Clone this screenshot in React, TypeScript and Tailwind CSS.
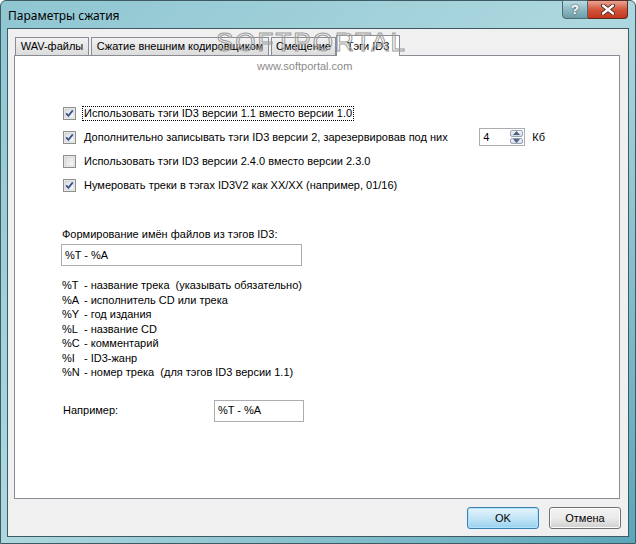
import React from "react";

const font = { fontFamily: '"Liberation Sans", Arial, sans-serif' };

function Check({ checked }: { checked: boolean }) {
  return (
    <svg width="13" height="13" viewBox="0 0 13 13" className="shrink-0">
      <defs>
        <linearGradient id="cbg" x1="0" y1="0" x2="1" y2="1">
          <stop offset="0" stopColor="#dcdcdc" />
          <stop offset="1" stopColor="#fbfbfb" />
        </linearGradient>
      </defs>
      <rect x="0.5" y="0.5" width="12" height="12" fill="#f4f4f4" stroke="#8e8f8f" />
      <rect x="2" y="2" width="9" height="9" fill="url(#cbg)" stroke="#c3c3c3" strokeWidth="0.6" />
      {checked && (
        <path d="M3.2 6.3 L5.4 8.8 L9.8 3.4" fill="none" stroke="#3a5591" strokeWidth="1.8" />
      )}
    </svg>
  );
}

function Row({ checked, focus, children }: { checked: boolean; focus?: boolean; children: React.ReactNode }) {
  return (
    <div className="flex h-6 items-center">
      <Check checked={checked} />
      <span className={"ml-[7px] text-[11px] leading-[13px] px-[1px] " + (focus ? "outline outline-1 outline-dotted outline-black" : "")}>
        {children}
      </span>
    </div>
  );
}

function Tab({ label, w, active }: { label: string; w: string; active?: boolean }) {
  return active ? (
    <div className={"relative z-10 -mb-px -ml-[2px] flex h-[21px] items-center justify-center border border-b-0 border-[#898c95] bg-white text-[11px] " + w}>
      {label}
    </div>
  ) : (
    <div className={"mt-[2px] flex h-[18px] items-center justify-center border border-b-0 border-[#898c95] bg-gradient-to-b from-[#f2f2f2] to-[#dcdcdc] text-[11px] " + w}>
      {label}
    </div>
  );
}

function Btn({ label, def }: { label: string; def?: boolean }) {
  return (
    <div
      className={
        "flex h-[22px] w-[72px] items-center justify-center rounded-[3px] border text-[11px] " +
        (def
          ? "border-[#3c7fb1] bg-gradient-to-b from-[#e5f4fc] via-[#c4e5f6] to-[#98d1ef] shadow-[inset_0_0_0_1px_#aee3fb]"
          : "border-[#707070] bg-gradient-to-b from-[#f2f2f2] via-[#ebebeb] to-[#cfcfcf] shadow-[inset_0_0_0_1px_#fcfcfc]")
      }
    >
      {label}
    </div>
  );
}

export default function App() {
  const legend = [
    ["%T", "- название трека  (указывать обязательно)"],
    ["%A", "- исполнитель CD или трека"],
    ["%Y", "- год издания"],
    ["%L", "- название CD"],
    ["%C", "- комментарий"],
    ["%I", "- ID3-жанр"],
    ["%N", "- номер трека  (для тэгов ID3 версии 1.1)"],
  ];
  return (
    <div style={font} className="h-[544px] w-[636px] overflow-hidden text-black">
      <div className="relative flex h-full flex-col rounded-t-[6px] border border-[#3e5b63] bg-gradient-to-br from-[#8ec6d2] via-[#aed8df] to-[#5aa6ba] px-[6px] pb-[6px]">
        {/* title bar */}
        <div className="flex h-[27px] shrink-0 items-start">
          <div className="pl-[1px] pt-[6px] text-[12px]" style={{ fontFamily: '"Noto Sans", "Liberation Sans", sans-serif' }}>
            Параметры сжатия
          </div>
          <div className="ml-auto mr-[1px] flex h-[19px] -mt-px">
            <div className="flex w-[26px] items-center justify-center rounded-bl-[4px] border border-[#4d6a72] bg-gradient-to-b from-[#b9dbe2] via-[#8fb9c3] to-[#6b9ca8] text-[13px] font-bold text-white [text-shadow:0_0_2px_#333]">
              ?
            </div>
            <div className="flex w-[40px] items-center justify-center rounded-br-[4px] border border-l-0 border-[#5a2a22] bg-gradient-to-b from-[#e8a493] via-[#d2553c] to-[#c3371d]">
              <svg width="14" height="11" viewBox="0 0 14 11">
                <path d="M2 1.5 L12 9.5 M12 1.5 L2 9.5" stroke="#3a1a14" strokeWidth="4" strokeLinecap="round" />
                <path d="M2 1.5 L12 9.5 M12 1.5 L2 9.5" stroke="#fff" strokeWidth="2.4" strokeLinecap="round" />
              </svg>
            </div>
          </div>
        </div>

        {/* client area */}
        <div className="flex flex-1 flex-col border border-[#3e5b63] bg-[#f0f0f0] px-[6px] pt-[6px]">
          {/* tabs */}
          <div className="flex items-end gap-[2px] pl-[1px]">
            <Tab label="WAV-файлы" w="w-[74px]" />
            <Tab label="Сжатие внешним кодировщиком" w="w-[178px]" />
            <Tab label="Смещение" w="w-[65px]" />
            <Tab label="Тэги ID3" w="w-[64px]" active />
          </div>
          <div className="relative mr-[2px] h-[444px] border border-[#898c95] bg-white pl-[48px] pt-[45px]">
            {/* watermark */}
            <div className="pointer-events-none absolute left-[201px] top-[-27px] z-20 text-[26px] leading-none tracking-[2px] text-transparent [-webkit-text-stroke:1px_#9c9c9c]">
              SOFTPORTAL
            </div>
            <div className="pointer-events-none absolute left-[242px] top-[2px] text-[11px] text-[#8a8a8a]">
              www.softportal.com
            </div>

            <Row checked focus>Использовать тэги ID3 версии 1.1 вместо версии 1.0</Row>
            <div className="flex h-6 items-center">
              <Check checked />
              <span className="ml-[7px] px-[1px] text-[11px]">
                Дополнительно записывать тэги ID3 версии 2, зарезервировав под них
              </span>
              <div className="ml-auto flex h-[18px] w-[46px] border border-[#abadb3] bg-white">
                <div className="flex flex-1 items-center pl-[3px] text-[11px]">4</div>
                <div className="flex w-[15px] flex-col gap-px p-px">
                  <div className="flex flex-1 items-center justify-center rounded-[2px] border border-[#9aa6b4] bg-gradient-to-b from-[#f3f6fa] to-[#d4dbe4]">
                    <svg width="7" height="4"><path d="M0 4 L3.5 0 L7 4Z" fill="#4d6185" /></svg>
                  </div>
                  <div className="flex flex-1 items-center justify-center rounded-[2px] border border-[#9aa6b4] bg-gradient-to-b from-[#f3f6fa] to-[#d4dbe4]">
                    <svg width="7" height="4"><path d="M0 0 L3.5 4 L7 0Z" fill="#4d6185" /></svg>
                  </div>
                </div>
              </div>
              <span className="ml-[7px] mr-[74px] text-[11px]">Кб</span>
            </div>
            <Row checked={false}>Использовать тэги ID3 версии 2.4.0 вместо версии 2.3.0</Row>
            <Row checked>Нумеровать треки в тэгах ID3V2 как XX/XX (например, 01/16)</Row>

            <div className="-ml-px mt-[31px] text-[11px] leading-[13px]">Формирование имён файлов из тэгов ID3:</div>
            <div className="-ml-[2px] mt-[3px] flex h-[22px] w-[241px] items-center border border-[#abadb3] bg-white pl-[3px] text-[11px]">
              %T - %A
            </div>

            <div className="-ml-px mt-[12px] flex flex-col text-[11px] leading-[14.5px]">
              {legend.map(([k, v]) => (
                <div key={k} className="flex whitespace-pre">
                  <span className="w-[22px] shrink-0">{k}</span>
                  <span>{v}</span>
                </div>
              ))}
            </div>

            <div className="mt-[20px] flex items-center">
              <span className="w-[151px] text-[11px]">Например:</span>
              <div className="flex h-[22px] w-[90px] items-center border border-[#abadb3] bg-white pl-[3px] text-[11px]">
                %T - %A
              </div>
            </div>
          </div>

          {/* buttons */}
          <div className="mt-[8px] flex justify-end gap-[10px] pr-[1px]">
            <Btn label="OK" def />
            <Btn label="Отмена" />
          </div>
        </div>
      </div>
    </div>
  );
}
